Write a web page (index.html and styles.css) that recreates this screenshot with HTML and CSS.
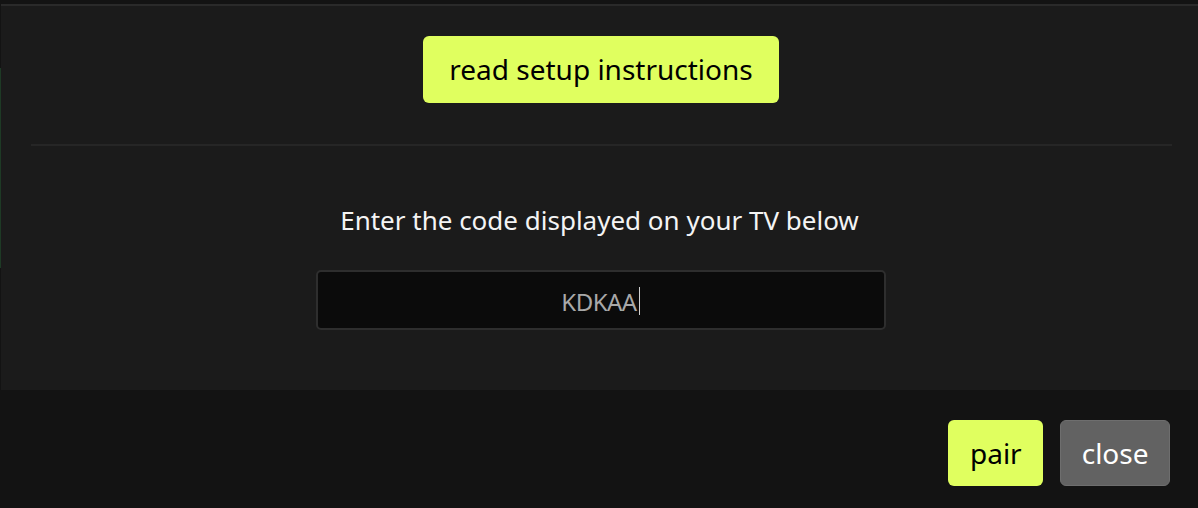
FILE: index.html
```html
<!DOCTYPE html>
<html lang="en">
<head>
  <meta charset="UTF-8" />
  <title>Pair TV</title>
  <meta name="viewport" content="width=device-width, initial-scale=1.0" />
  <link rel="stylesheet" href="styles.css">
</head>
<body>
  <div class="dialog">
    <section class="body">
      <div class="top">
        <button class="btn btn-accent btn-big">read setup instructions</button>
      </div>
      <hr class="sep" />
      <p class="hint">Enter the code displayed on your TV below</p>
      <div class="code-wrap">
        <div class="code">KDKAA<span class="caret"></span></div>
      </div>
    </section>
    <footer class="actions">
      <button class="btn btn-accent">pair</button>
      <button class="btn btn-grey">close</button>
    </footer>
  </div>
</body>
</html>
```

FILE: styles.css
```css
html, body {
  height: 100%;
}
body {
  margin: 0;
  padding-top: 4px;
  padding-left: 1px;
  box-sizing: border-box;
  font-family: "Noto Sans", "Open Sans", sans-serif;
  background-color: #131313;
  background-image: linear-gradient(to bottom, #131313 68px, #1e3a25 68px, #1e3a25 268px, #131313 268px);
  background-size: 1px 100%;
  background-repeat: no-repeat;
  color: #f0f0f0;
}
.dialog {
  border-top: 2px solid #2a2a2a;
}
.body {
  background: #1b1b1b;
  height: 384px;
  padding-top: 30px;
  box-sizing: border-box;
}
.top {
  display: flex;
  justify-content: center;
}
.btn {
  font-family: inherit;
  border-radius: 6px;
  border: 1px solid transparent;
  cursor: pointer;
  height: 66px;
  padding: 0 20.5px;
  font-size: 28px;
}
.btn-big {
  height: 67px;
  width: 356px;
  margin-left: 3px;
  padding-bottom: 1px;
}
.btn-accent {
  background: #e0ff5f;
  color: #000;
}
.btn-grey {
  background: #626262;
  border-color: #6e6e6e;
  color: #fff;
}
.sep {
  border: none;
  height: 2px;
  background: #262626;
  margin: 41px 26px 0 30px;
}
.hint {
  text-align: center;
  font-size: 26px;
  margin: 56px 0 0 0;
  line-height: 36px;
  color: #f4f4f4;
}
.code-wrap {
  display: flex;
  justify-content: center;
  margin-top: 32px;
}
.code {
  width: 570px;
  height: 60px;
  box-sizing: border-box;
  margin-left: 2px;
  background: #0b0b0b;
  border: 2px solid #2e2e2e;
  border-radius: 5px;
  display: flex;
  align-items: center;
  justify-content: center;
  font-size: 24px;
  letter-spacing: -0.5px;
  color: #a8a8a8;
  padding-top: 2px;
}
.caret {
  display: inline-block;
  width: 1px;
  height: 28px;
  background: #cfcfcf;
  margin-left: 2px;
}
.actions {
  display: flex;
  justify-content: flex-end;
  gap: 17px;
  padding: 30px 28px 0 0;
  background: #131313;
}
```
